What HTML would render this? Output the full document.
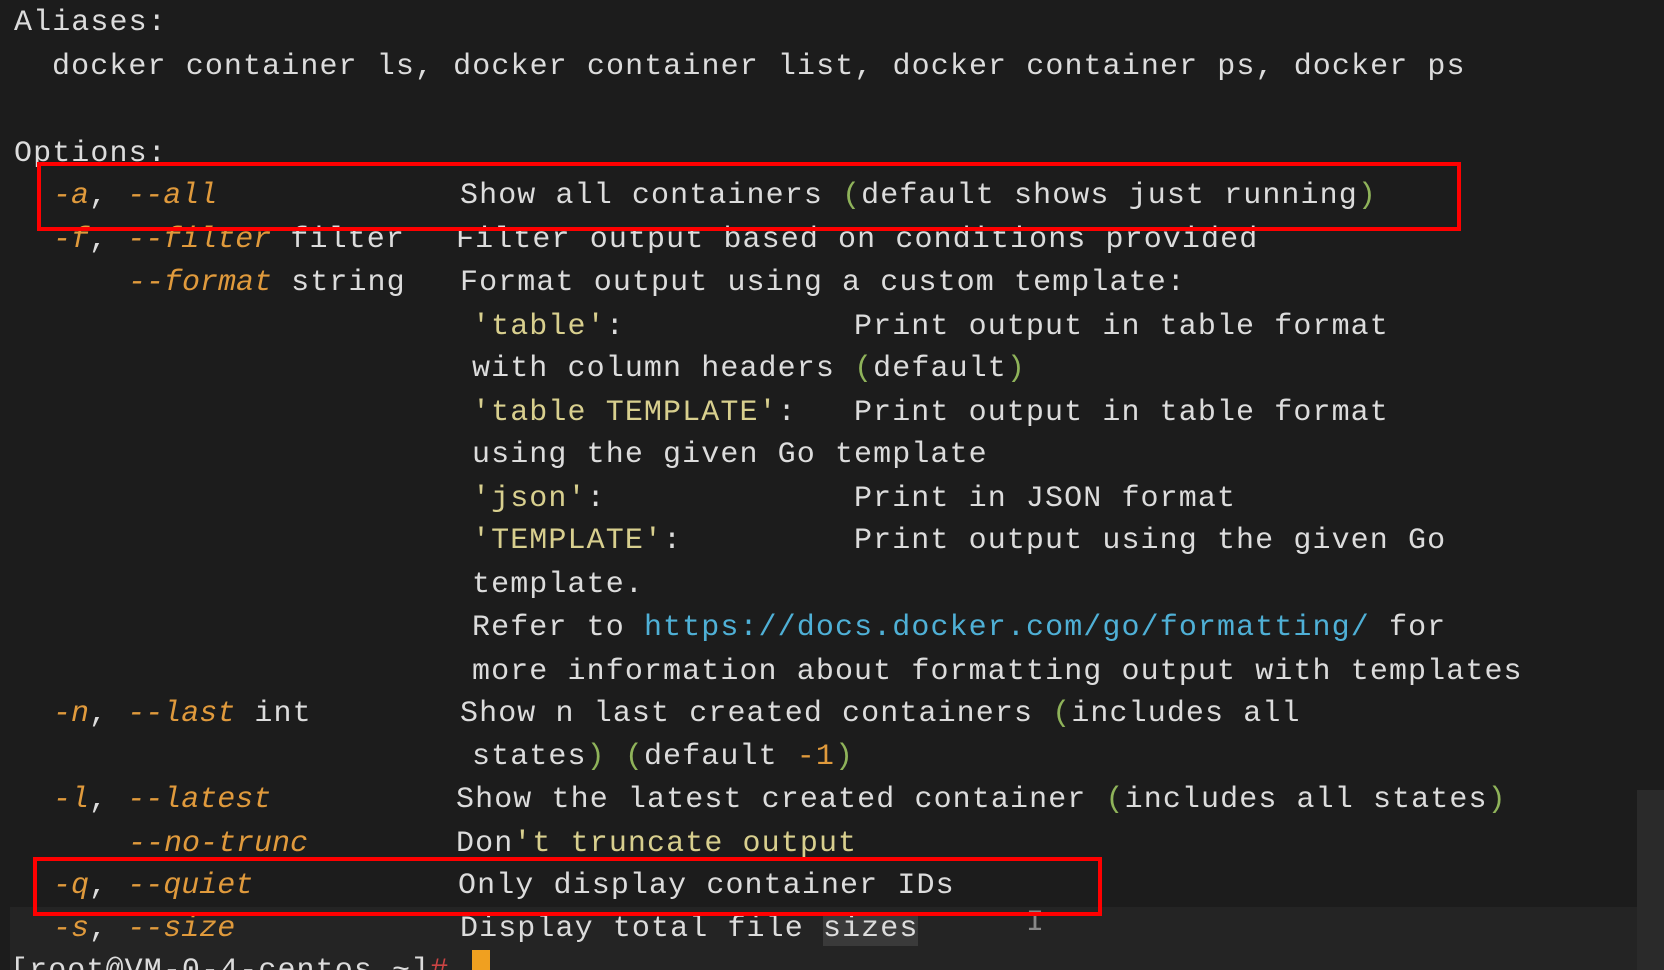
<!DOCTYPE html>
<html style="width:1664px;height:970px;overflow:hidden"><head><style>
html,body{margin:0;padding:0;}
body{width:1664px;height:970px;background:#1c1c1c;overflow:hidden;position:relative;font-family:"Liberation Mono",monospace;font-size:30px;letter-spacing:1.1px;color:#dcdcdc;}
.l{position:absolute;white-space:pre;line-height:34px;}
.o{color:#e09a3c;font-style:italic;letter-spacing:0;}
.s{color:#d8cf8e;}
.p{color:#8fb35a;}
.u{color:#4fb0d6;}
.n{color:#e09a3c;}
.box{position:absolute;border:4px solid #f00;box-sizing:border-box;}
</style></head><body>
<div style="position:absolute;left:10px;top:907px;width:1627px;height:63px;background:#242424"></div>
<div style="position:absolute;left:1637px;top:790px;width:27px;height:180px;background:#2a2a2a"></div>
<div class="l" style="left:14px;top:6px">Aliases:</div>
<div class="l" style="left:52px;top:50px">docker container ls, docker container list, docker container ps, docker ps</div>
<div class="l" style="left:14px;top:137px">Options:</div>
<div class="l" style="left:53px;top:179px"><span class="o">-a</span>, <span class="o">--all</span></div>
<div class="l" style="left:460px;top:179px">Show all containers <span class="p">(</span>default shows just running<span class="p">)</span></div>
<div class="l" style="left:53px;top:223px"><span class="o">-f</span>, <span class="o">--filter</span> filter</div>
<div class="l" style="left:456px;top:223px">Filter output based on conditions provided</div>
<div class="l" style="left:128px;top:266px"><span class="o">--format</span> string</div>
<div class="l" style="left:460px;top:266px">Format output using a custom template:</div>
<div class="l" style="left:472px;top:310px"><span class="s">'table'</span>:</div>
<div class="l" style="left:854px;top:310px">Print output in table format</div>
<div class="l" style="left:472px;top:352px">with column headers <span class="p">(</span>default<span class="p">)</span></div>
<div class="l" style="left:472px;top:396px"><span class="s">'table TEMPLATE'</span>:</div>
<div class="l" style="left:854px;top:396px">Print output in table format</div>
<div class="l" style="left:472px;top:438px">using the given Go template</div>
<div class="l" style="left:472px;top:482px"><span class="s">'json'</span>:</div>
<div class="l" style="left:854px;top:482px">Print in JSON format</div>
<div class="l" style="left:472px;top:524px"><span class="s">'TEMPLATE'</span>:</div>
<div class="l" style="left:854px;top:524px">Print output using the given Go</div>
<div class="l" style="left:472px;top:568px">template.</div>
<div class="l" style="left:472px;top:611px">Refer to <span class="u">https://docs.docker.com/go/formatting/</span> for</div>
<div class="l" style="left:472px;top:655px">more information about formatting output with templates</div>
<div class="l" style="left:53px;top:697px"><span class="o">-n</span>, <span class="o">--last</span> int</div>
<div class="l" style="left:460px;top:697px">Show n last created containers <span class="p">(</span>includes all</div>
<div class="l" style="left:472px;top:740px">states<span class="p">)</span> <span class="p">(</span>default <span class="n">-1</span><span class="p">)</span></div>
<div class="l" style="left:53px;top:783px"><span class="o">-l</span>, <span class="o">--latest</span></div>
<div class="l" style="left:456px;top:783px">Show the latest created container <span class="p">(</span>includes all states<span class="p">)</span></div>
<div class="l" style="left:128px;top:827px"><span class="o">--no-trunc</span></div>
<div class="l" style="left:456px;top:827px">Don<span class="s">'t truncate output</span></div>
<div class="l" style="left:53px;top:869px"><span class="o">-q</span>, <span class="o">--quiet</span></div>
<div class="l" style="left:458px;top:869px">Only display container IDs</div>
<div class="l" style="left:53px;top:912px"><span class="o">-s</span>, <span class="o">--size</span></div>
<div class="l" style="left:460px;top:912px">Display total file <span style="background:#3a3a3a">sizes</span></div>
<div class="l" style="left:1026px;top:906px;color:#888">I</div>
<div style="position:absolute;left:0;top:950px;width:1664px;height:20px;overflow:hidden">
<div class="l" style="left:10px;top:4px">[root@VM-0-4-centos ~]<span style="color:#c44">#</span> </div>
</div>
<div style="position:absolute;left:472px;top:950px;width:18px;height:20px;background:#f0a020"></div>
<div class="box" style="left:37px;top:162px;width:1424px;height:69px"></div>
<div class="box" style="left:33px;top:857px;width:1069px;height:59px"></div>
</body></html>
